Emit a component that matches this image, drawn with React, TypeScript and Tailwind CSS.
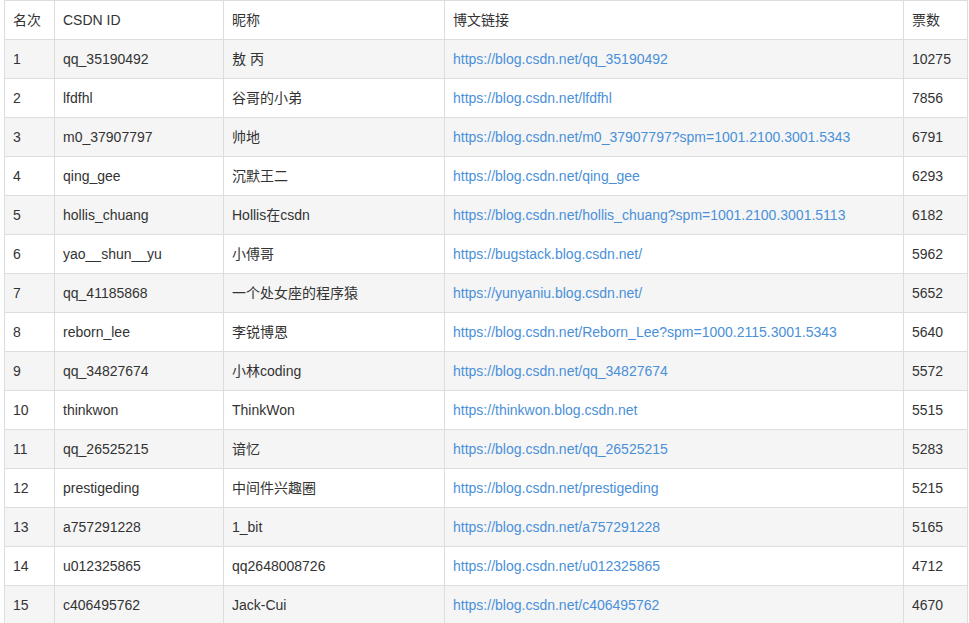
const rows: [string, string, string, string, string][] = [
  ['1', 'qq_35190492', '敖 丙', 'https://blog.csdn.net/qq_35190492', '10275'],
  ['2', 'lfdfhl', '谷哥的小弟', 'https://blog.csdn.net/lfdfhl', '7856'],
  ['3', 'm0_37907797', '帅地', 'https://blog.csdn.net/m0_37907797?spm=1001.2100.3001.5343', '6791'],
  ['4', 'qing_gee', '沉默王二', 'https://blog.csdn.net/qing_gee', '6293'],
  ['5', 'hollis_chuang', 'Hollis在csdn', 'https://blog.csdn.net/hollis_chuang?spm=1001.2100.3001.5113', '6182'],
  ['6', 'yao__shun__yu', '小傅哥', 'https://bugstack.blog.csdn.net/', '5962'],
  ['7', 'qq_41185868', '一个处女座的程序猿', 'https://yunyaniu.blog.csdn.net/', '5652'],
  ['8', 'reborn_lee', '李锐博恩', 'https://blog.csdn.net/Reborn_Lee?spm=1000.2115.3001.5343', '5640'],
  ['9', 'qq_34827674', '小林coding', 'https://blog.csdn.net/qq_34827674', '5572'],
  ['10', 'thinkwon', 'ThinkWon', 'https://thinkwon.blog.csdn.net', '5515'],
  ['11', 'qq_26525215', '谙忆', 'https://blog.csdn.net/qq_26525215', '5283'],
  ['12', 'prestigeding', '中间件兴趣圈', 'https://blog.csdn.net/prestigeding', '5215'],
  ['13', 'a757291228', '1_bit', 'https://blog.csdn.net/a757291228', '5165'],
  ['14', 'u012325865', 'qq2648008726', 'https://blog.csdn.net/u012325865', '4712'],
  ['15', 'c406495762', 'Jack-Cui', 'https://blog.csdn.net/c406495762', '4670'],
];

const cell = 'border border-[#dddddd] px-2 h-[39px] py-0 leading-5 text-left font-normal align-middle';

export default function App() {
  return (
    <div
      className="bg-white min-h-[623px] pl-[4px] text-[14px] text-[#333333]"
      style={{ fontFamily: '"Liberation Sans", "Noto Sans CJK SC", Arial, sans-serif' }}
    >
      <table className="w-[963px] border-collapse table-fixed">
        <colgroup>
          <col className="w-[50px]" />
          <col className="w-[169px]" />
          <col className="w-[221px]" />
          <col className="w-[459px]" />
          <col className="w-[64px]" />
        </colgroup>
        <thead>
          <tr className="bg-white">
            <th className={cell}>名次</th>
            <th className={cell}>CSDN ID</th>
            <th className={cell}>昵称</th>
            <th className={cell}>博文链接</th>
            <th className={cell}>票数</th>
          </tr>
        </thead>
        <tbody>
          {rows.map(([rank, id, nick, url, votes], i) => (
            <tr key={rank} className={i % 2 === 0 ? 'bg-[#f5f5f5]' : 'bg-white'}>
              <td className={cell}>{rank}</td>
              <td className={cell}>{id}</td>
              <td className={cell}>{nick}</td>
              <td className={cell}>
                <a href={url} className="text-[#4a90d9]">{url}</a>
              </td>
              <td className={cell}>{votes}</td>
            </tr>
          ))}
        </tbody>
      </table>
    </div>
  );
}
